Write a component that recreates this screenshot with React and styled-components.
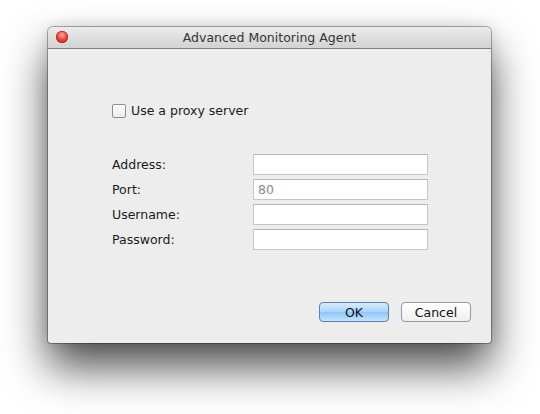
import React from "react";
import styled, { createGlobalStyle } from "styled-components";

const GlobalStyle = createGlobalStyle`
  html, body {
    margin: 0;
    padding: 0;
    background: #ffffff;
  }
  body {
    font-family: "DejaVu Sans", "Liberation Sans", sans-serif;
  }
`;

const Desktop = styled.div`
  width: 540px;
  height: 414px;
  padding: 27px 0 0 48px;
  box-sizing: border-box;
  overflow: hidden;
`;

const Window = styled.div`
  width: 443px;
  height: 316px;
  border-radius: 5px 5px 3px 3px;
  background: #ededed;
  box-shadow: 0 24px 44px rgba(0, 0, 0, 0.7), 0 0 14px rgba(0, 0, 0, 0.12),
    0 0 0 1px rgba(0, 0, 0, 0.3);
  display: flex;
  flex-direction: column;
  overflow: hidden;
`;

const TitleBar = styled.div`
  height: 21px;
  flex: 0 0 21px;
  background: linear-gradient(#ebebeb, #d3d3d3);
  border-bottom: 1px solid #808080;
  display: flex;
  align-items: center;
  justify-content: center;
  position: relative;
  font-size: 12.5px;
  color: #353535;
`;

const CloseButton = styled.span`
  position: absolute;
  left: 8px;
  top: 4px;
  width: 12px;
  height: 12px;
  border-radius: 50%;
  background: radial-gradient(circle at 50% 35%, #ffb3ad 0%, #f4463a 45%, #b3150e 100%);
  box-shadow: inset 0 0 0 0.5px #8a1a14;
`;

const Content = styled.div`
  flex: 1;
  display: flex;
  flex-direction: column;
  padding: 54px 20px 21px 64px;
`;

const CheckRow = styled.label`
  display: flex;
  align-items: center;
  gap: 5px;
  font-size: 12.5px;
  color: #1a1a1a;
`;

const CheckBox = styled.span`
  width: 12px;
  height: 12px;
  border: 1px solid #8e8e8e;
  border-radius: 2px;
  background: linear-gradient(#ffffff, #ececec);
`;

const Form = styled.div`
  display: grid;
  grid-template-columns: 141px 175px;
  grid-auto-rows: 21px;
  row-gap: 4px;
  margin-top: 36px;
  align-items: center;
`;

const Label = styled.span`
  font-size: 12.5px;
  color: #1a1a1a;
`;

const Field = styled.div`
  height: 21px;
  box-sizing: border-box;
  background: #ffffff;
  border: 1px solid #c6c6c6;
  border-top-color: #b5b5b5;
  font-size: 12.5px;
  color: #8a8a8a;
  padding: 2px 4px;
  line-height: 16px;
`;

const Buttons = styled.div`
  margin-top: auto;
  display: flex;
  justify-content: flex-end;
  gap: 12px;
`;

const Button = styled.button`
  width: 70px;
  height: 20px;
  border-radius: 4px;
  font-family: inherit;
  font-size: 12.5px;
  color: #111;
  padding: 0;
  border: 1px solid ${(p) => (p.$primary ? "#5a7fa8" : "#9a9a9a")};
  background: ${(p) =>
    p.$primary
      ? "linear-gradient(#d6ebfd 0%, #a9d4fa 50%, #8cc6f8 51%, #c5e4fd 100%)"
      : "linear-gradient(#ffffff, #f0f0f0)"};
`;

const fields = [
  { label: "Address:", value: "" },
  { label: "Port:", value: "80" },
  { label: "Username:", value: "" },
  { label: "Password:", value: "" },
];

export default function App() {
  return (
    <>
      <GlobalStyle />
      <Desktop>
        <Window>
          <TitleBar>
            <CloseButton />
            Advanced Monitoring Agent
          </TitleBar>
          <Content>
            <CheckRow>
              <CheckBox />
              Use a proxy server
            </CheckRow>
            <Form>
              {fields.map((f) => (
                <React.Fragment key={f.label}>
                  <Label>{f.label}</Label>
                  <Field>{f.value}</Field>
                </React.Fragment>
              ))}
            </Form>
            <Buttons>
              <Button $primary>OK</Button>
              <Button>Cancel</Button>
            </Buttons>
          </Content>
        </Window>
      </Desktop>
    </>
  );
}
